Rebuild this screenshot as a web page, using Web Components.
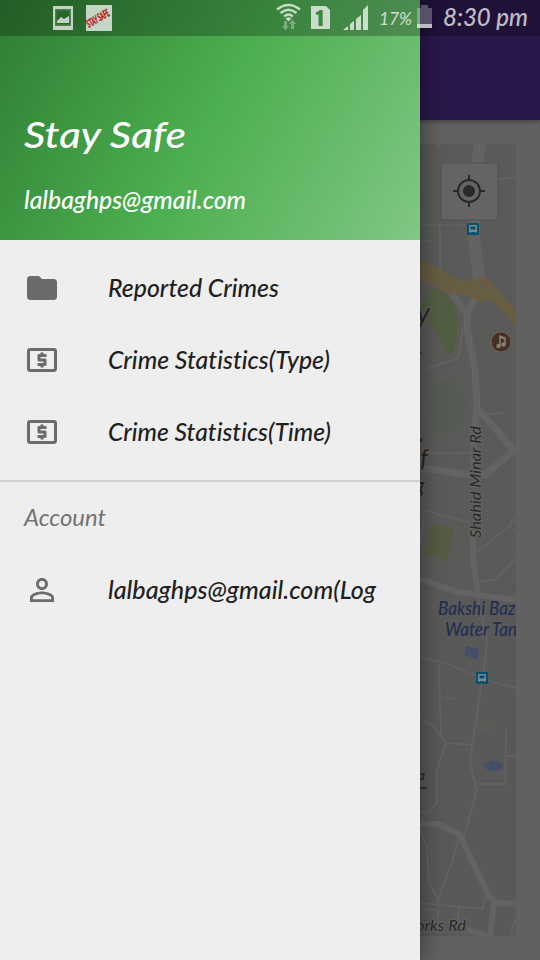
<!DOCTYPE html>
<html lang="en">
<head>
<meta charset="utf-8">
<title>Stay Safe</title>
<style>
body{margin:0;font-family:Lato,"Open Sans",sans-serif;font-style:italic;background:#616161;font-variant-ligatures:none}
</style>
</head>
<body>
<safe-app></safe-app>
<script>
class Base extends HTMLElement{
  connectedCallback(){
    if(this.shadowRoot)return;
    const t=document.createElement('template');
    t.innerHTML=this.view();
    this.attachShadow({mode:'open'}).append(t.content.cloneNode(true));
  }
}

/* One line of lettering fitted to a given width */
customElements.define('hand-text',class extends Base{
  view(){
    const w=+this.getAttribute('w'),s=+this.getAttribute('size')||24,h=Math.round(s*1.4);
    const fw=this.getAttribute('weight')||500;
    return `<style>:host{display:block;height:${h}px;width:${w}px}svg{display:block;overflow:visible}
    text{fill:currentColor;font-size:${s}px;font-weight:${fw};font-family:inherit}</style>
    <svg width="${w}" height="${h}"><text x="0" y="${s}" textLength="${w}" lengthAdjust="spacingAndGlyphs">${this.getAttribute('label')}</text></svg>`;
  }
});

const ICONS={
  folder:'<path d="M10 4H4c-1.1 0-1.99.9-1.99 2L2 18c0 1.1.9 2 2 2h16c1.1 0 2-.9 2-2V8c0-1.1-.9-2-2-2h-8l-2-2z"/>',
  money:'<path d="M11 17h2v-1h1c.55 0 1-.45 1-1v-3c0-.55-.45-1-1-1h-3v-1h4V8h-2V7h-2v1h-1c-.55 0-1 .45-1 1v3c0 .55.45 1 1 1h3v1H9v2h2v1zm9-13H4c-1.11 0-1.99.89-1.99 2L2 18c0 1.11.89 2 2 2h16c1.11 0 2-.89 2-2V6c0-1.11-.89-2-2-2zm0 14H4V6h16v12z"/>',
  person:'<path d="M12 5.9c1.16 0 2.1.94 2.1 2.1s-.94 2.1-2.1 2.1S9.900 9.160 9.900 8s.94-2.100 2.100-2.100m0 9c2.970 0 6.100 1.460 6.100 2.100v1.100H5.900V17c0-.64 3.130-2.100 6.100-2.100M12 4C9.790 4 8 5.790 8 8s1.790 4 4 4 4-1.790 4-4-1.790-4-4-4zm0 9c-2.670 0-8 1.340-8 4v3h16v-3c0-2.660-5.330-4-8-4z"/>'
};
customElements.define('nav-item',class extends Base{
  view(){return `<style>:host{display:flex;align-items:center;height:72px;padding-left:24px;color:#1f1f1f}
    svg{width:36px;height:36px;fill:#6b6b6b;margin-right:48px;flex:none}
    hand-text{margin-top:4px}</style>
    <svg viewBox="0 0 24 24">${ICONS[this.getAttribute('icon')]}</svg>
    <hand-text w="${this.getAttribute('w')}" size="24" label="${this.getAttribute('label')}"></hand-text>`;}
});

customElements.define('drawer-header',class extends Base{
  view(){return `<style>:host{display:flex;flex-direction:column;box-sizing:border-box;height:240px;padding:112px 24px 0;color:#fff;
    background:linear-gradient(119.7deg,#2e7d32,#4caf50 50%,#81c784)}
    .mail{margin-top:23px}</style>
    <hand-text w="162" size="36" label="Stay Safe"></hand-text>
    <hand-text class="mail" w="222" size="24" label="lalbaghps@gmail.com"></hand-text>`;}
});

customElements.define('side-drawer',class extends Base{
  view(){return `<style>:host{display:flex;flex-direction:column;height:100%;background:#eee;box-shadow:0 0 22px rgba(0,0,0,.5)}
    .group{padding:12px 0}
    .account{border-top:2px solid #d1d1d1;padding-top:12px}
    .sub{height:60px;padding:8px 24px 0;box-sizing:border-box;color:#737373}</style>
    <drawer-header></drawer-header>
    <div class="group">
      <nav-item icon="folder" w="171" label="Reported Crimes"></nav-item>
      <nav-item icon="money" w="222" label="Crime Statistics(Type)"></nav-item>
      <nav-item icon="money" w="223" label="Crime Statistics(Time)"></nav-item>
    </div>
    <div class="account">
      <div class="sub"><hand-text w="82" size="24" weight="400" label="Account"></hand-text></div>
      <nav-item icon="person" w="268" label="lalbaghps@gmail.com(Log"></nav-item>
    </div>`;}
});

customElements.define('status-bar',class extends Base{
  view(){return `<style>:host{display:block;height:36px;background:rgba(0,0,0,.25)}svg{display:block}
    text{font-family:inherit}</style>
    <svg width="540" height="36" viewBox="0 0 540 36" fill="#fff">
      <g opacity=".72">
        <path fill-rule="evenodd" d="M53 6h20v24H53zM55 9v17h16V9z"/>
        <path fill-rule="evenodd" d="M55 9h16v17H55zM56.500 10.500v14h13v-14z" opacity=".25"/>
        <path d="M57 23v-2l4-4 3 2 5-3v7z"/>
        <path d="M86 5h26v26H86z"/>
        <g fill="none" stroke="#fff" stroke-width="2.300">
          <path d="M277 9.500Q288.500 .5 300 9.500M280.500 13Q288.500 6.500 296.500 13M284 16.500Q288.500 12.500 293 16.500"/>
        </g>
        <path d="M285.500 18.500q3-2.500 6 0l-3 3z"/>
        <path opacity=".45" d="M284 21h3v5h2l-3.500 4.500L282 26h2zM291 29h3v-5h2l-3.500-4.500L289 24h2z"/>
        <path fill-rule="evenodd" d="M311 6h15l4 4v19h-19zM316 12v2.700h2.500V26h4.200V10h-3.200q-.7 2-3.500 2z"/>
        <path d="M343 30l5-4v4zM350 24l4-3v9h-4zM356 19l5-4v15h-5zM363 10l5-5v25h-5z"/>
        <path opacity=".38" d="M417 8h4V5h7v3h4v16h-15z"/>
        <path d="M417 24h15v4h-15z"/>
        <text x="379" y="25" font-size="18" textLength="33" lengthAdjust="spacingAndGlyphs">17%</text>
        <text x="443" y="26" font-size="24" font-weight="500" textLength="85" lengthAdjust="spacingAndGlyphs">8:30 pm</text>
      </g>
      <text transform="translate(89 28) rotate(-31)" fill="#b82015" stroke="#b82015" stroke-width=".5" font-family="Liberation Sans" font-weight="bold" font-size="10.500" textLength="25" lengthAdjust="spacingAndGlyphs">STAY SAFE</text>
    </svg>`;}
});

/* Street map, dimmed by the open drawer */
customElements.define('street-map',class extends Base{
  view(){
    const bus=(x,y)=>`<g transform="translate(${x} ${y})"><rect width="12" height="12" rx="1" fill="#084f6e"/><path fill="#7b8a91" fill-rule="evenodd" d="M3 2h6q1 0 1 1v6H9v1H8V9H4v1H3V9H2V3q0-1 1-1zM3.500 3.500v3h5v-3z"/></g>`;
    return `<style>:host{display:block}svg{display:block}text{font-family:inherit}</style>
    <svg width="492" height="792" viewBox="24 144 492 792">
      <rect x="24" y="144" width="492" height="792" fill="#595959"/>
      <path d="M24 144h492v440l-96 33H24z" fill="#5a5a58"/>
      <ellipse cx="447" cy="407" rx="19" ry="26" fill="#555a53"/>
      <path d="M420 304l15-16 12 6 8 14 3 14-2 22-4 9-5 2-8-20-19-22z" fill="#525e42"/>
      <path d="M431 523l23 5-7 33-23-7z" fill="#545c43"/>
      <path d="M476 719l16 3-1 12-16-3z" fill="#5c5b57"/>
      <g fill="none" stroke="#636363" stroke-linejoin="round">
        <g stroke-width="1.700">
          <path d="M439 144v4M420 225h45M440 225v45M420 241h14M482 179h18l16-2M420 371l38-13 5-30M485 414l18-1M420 453h55M420 509l51 14M424 513l-3 30M475 554l42-35M478 582l18-3 20-21M516 515l-5 5v7l5 6M478 598l9 43-1 16-4 24-11 73v12l4 18 2 6-14 50"/>
          <path d="M420 657l28 7 34 15 34 9M439 664l2 72 5 7-9 27v33l-8 9h-9M441 697l13 2M420 719l12 6 9 11 5 7 26 2M506 729l-1 55h-29M505 756h11M420 830l7 18 2 35 9 17M420 903l63 6 1-11h5M459 836l-7 26-14 38v28M459 908l-2 18M516 918l-6 17M420 910h16"/>
        </g>
        <path stroke-width="12" d="M480 144l-6 45v50l6 48"/>
        <path stroke-width="7" d="M449 289l18 25 14-26M467 314v15l8 41 2 35-3 32v32M477 408l37 42-29 25H474l-54-7"/>
        <path stroke-width="6" d="M473 531v27l5 36M420 579l38 13 58 8M420 824h18l21 10 30 62 8 7 19 1M494 902l-4 34M467 929l22 9"/>
      </g>
      <path d="M415 259l20 9 23 13 16 2q2-5 7-5 6 0 9 6l12 14 20 19v18q-13-23-34-38-7 6-13 2-4-3-4-4l-22-3-34-17z" fill="#665d43" stroke="#755f35" stroke-width="1.200"/>
      <circle cx="481" cy="287" r="3" fill="#595959" stroke="#755f35" stroke-width="1.200"/>
      <path d="M467 646l12 3-2 10-13-4z" fill="#414f68"/>
      <path d="M483 765l9-5 10 3v6l-8 2-8-2z" fill="#414f68"/>
      ${bus(467,223)}${bus(476,672)}
      <circle cx="501" cy="342" r="10" fill="#472f22" stroke="#6b6560"/>
      <path d="M500 346v-10l5 2v6M500 337l5 2" fill="none" stroke="#858079" stroke-width="1.500"/><circle cx="498.500" cy="346" r="2.200" fill="#858079"/><circle cx="503.500" cy="344.500" r="2.200" fill="#858079"/>
      <g stroke="#646464" stroke-width="2.500" paint-order="stroke" stroke-linejoin="round" fill="#292929">
        <text x="416" y="323" font-size="29" textLength="14" lengthAdjust="spacingAndGlyphs">y</text>
        <text transform="translate(481 538) rotate(-90)" font-size="15.500" textLength="112" lengthAdjust="spacingAndGlyphs">Shahid Minar Rd</text>
        <text x="416" y="931" font-size="16" textLength="50" lengthAdjust="spacingAndGlyphs">orks Rd</text>
        <text x="420" y="467" font-size="25" fill="#30221a">f</text>
        <text x="414" y="493" font-size="22" fill="#30221a">g</text>
      </g>
      <path d="M418 356l3-4M418 443l4-4" stroke="#292929" stroke-width="2"/>
      <path d="M418 774h6l-1 5h-5M418 788h9" fill="none" stroke="#292929" stroke-width="1.500"/>
      <g fill="#202f51" font-weight="500">
        <text x="438" y="615" font-size="18.500" textLength="86" lengthAdjust="spacingAndGlyphs">Bakshi Baza</text>
        <text x="445" y="636" font-size="18.500" textLength="80" lengthAdjust="spacingAndGlyphs">Water Tank</text>
      </g>
      <rect x="441" y="163" width="57" height="57" rx="1.500" fill="#656565" fill-opacity=".94" stroke="#505050" stroke-width="1"/>
      <g fill="none" stroke="#292929" stroke-width="2"><circle cx="469" cy="191" r="11"/><path d="M469 175v5M469 202v5M453 191h5M480 191h5"/></g>
      <circle cx="469" cy="191" r="6" fill="#292929"/>
    </svg>`;}
});

customElements.define('safe-app',class extends Base{
  view(){return `<style>:host{display:block;position:relative;width:540px;height:960px;overflow:hidden;background:#616161}
    .bar{height:120px;background:#2a174b;box-shadow:0 1px 5px rgba(0,0,0,.4)}
    main{padding:24px}
    side-drawer{position:absolute;left:0;top:0;width:420px}
    status-bar{position:absolute;left:0;top:0;width:540px}</style>
    <div class="bar"></div><main><street-map></street-map></main>
    <side-drawer></side-drawer><status-bar></status-bar>`;}
});
</script>
</body>
</html>
